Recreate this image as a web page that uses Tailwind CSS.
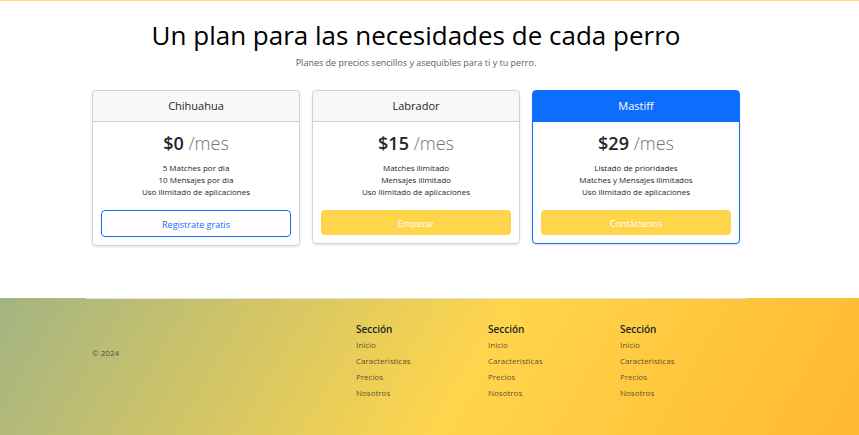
<!DOCTYPE html>
<html lang="es">
<head>
<meta charset="utf-8">
<meta name="viewport" content="width=device-width, initial-scale=1">
<title>Planes y precios</title>
<script src="https://cdn.jsdelivr.net/npm/@tailwindcss/browser@4"></script>
</head>
<body class="flex min-h-screen flex-col border-t border-[#ffdb74] bg-white font-['Open_Sans','Noto_Sans',sans-serif] text-[#212529]">
<main class="pr-[27px] pb-[52px]">
  <div class="mx-auto max-w-[660px] px-1.5">
    <header class="pt-4 text-center">
      <h1 class="text-[26px] leading-9 whitespace-nowrap text-black">Un plan para las necesidades de cada perro</h1>
      <p class="pt-0.5 text-[9px] leading-4 text-[#5c6166]">Planes de precios sencillos y asequibles para ti y tu perro.</p>
    </header>
    <div class="mt-[19px] grid grid-cols-3 items-start gap-3 text-center">
      <section class="rounded border border-[#d3d3d4] shadow-sm">
        <h2 class="rounded-t border-b border-[#d3d3d4] bg-[#f8f8f8] py-1.5 text-[11px] leading-[18px]">Chihuahua</h2>
        <div class="p-2">
          <p class="pt-[3px] text-lg leading-5 font-semibold">$0 <small class="text-lg leading-5 font-light text-[#6c757d]">/mes</small></p>
          <ul class="pt-[9px] text-[8px] leading-3">
            <li>5 Matches por dia</li>
            <li>10 Mensajes por dia</li>
            <li>Uso ilimitado de aplicaciones</li>
          </ul>
          <button type="button" class="mt-3 block h-[27px] w-full rounded border border-[#0d6efd] pt-0.5 text-[9px] text-[#0d6efd]">Registrate gratis</button>
        </div>
      </section>
      <section class="rounded border border-[#d3d3d4] shadow-sm">
        <h2 class="rounded-t border-b border-[#d3d3d4] bg-[#f8f8f8] py-1.5 text-[11px] leading-[18px]">Labrador</h2>
        <div class="p-2">
          <p class="pt-[3px] text-lg leading-5 font-semibold">$15 <small class="text-lg leading-5 font-light text-[#6c757d]">/mes</small></p>
          <ul class="pt-[9px] text-[8px] leading-3">
            <li>Matches ilimitado</li>
            <li>Mensajes ilimitado</li>
            <li>Uso ilimitado de aplicaciones</li>
          </ul>
          <button type="button" class="mt-3 block h-[25px] w-full rounded bg-[#ffd54c] pt-0.5 text-[9px] text-white">Empezar</button>
        </div>
      </section>
      <section class="rounded border border-[#0d6efd] shadow-sm">
        <h2 class="border-b border-[#0d6efd] bg-[#0d6efd] py-1.5 text-[11px] leading-[18px] text-white">Mastiff</h2>
        <div class="p-2">
          <p class="pt-[3px] text-lg leading-5 font-semibold">$29 <small class="text-lg leading-5 font-light text-[#6c757d]">/mes</small></p>
          <ul class="pt-[9px] text-[8px] leading-3">
            <li>Listado de prioridades</li>
            <li>Matches y Mensajes ilimitados</li>
            <li>Uso ilimitado de aplicaciones</li>
          </ul>
          <button type="button" class="mt-3 block h-[25px] w-full rounded bg-[#ffd54c] pt-0.5 text-[9px] text-white">Contáctenos</button>
        </div>
      </section>
    </div>
  </div>
</main>
<footer class="grow bg-[linear-gradient(120deg,#a3b482_0%,#ffd54c_55%,#ffb82f_100%)] pr-[27px]">
  <div class="mx-auto grid max-w-[660px] grid-cols-5 border-t border-[#dee2e6] pt-6 pb-8 text-[8px] leading-4 text-[#212529]/75">
    <p class="col-span-2 px-1.5 pt-[22px]">© 2024</p>
    <nav class="px-1.5">
      <h3 class="pb-0.5 text-[10px] leading-3 font-semibold text-[#212529]">Sección</h3>
      <ul>
        <li><a href="#">Inicio</a></li>
        <li><a href="#">Caracteristicas</a></li>
        <li><a href="#">Precios</a></li>
        <li><a href="#">Nosotros</a></li>
      </ul>
    </nav>
    <nav class="px-1.5">
      <h3 class="pb-0.5 text-[10px] leading-3 font-semibold text-[#212529]">Sección</h3>
      <ul>
        <li><a href="#">Inicio</a></li>
        <li><a href="#">Caracteristicas</a></li>
        <li><a href="#">Precios</a></li>
        <li><a href="#">Nosotros</a></li>
      </ul>
    </nav>
    <nav class="px-1.5">
      <h3 class="pb-0.5 text-[10px] leading-3 font-semibold text-[#212529]">Sección</h3>
      <ul>
        <li><a href="#">Inicio</a></li>
        <li><a href="#">Caracteristicas</a></li>
        <li><a href="#">Precios</a></li>
        <li><a href="#">Nosotros</a></li>
      </ul>
    </nav>
  </div>
</footer>
</body>
</html>
